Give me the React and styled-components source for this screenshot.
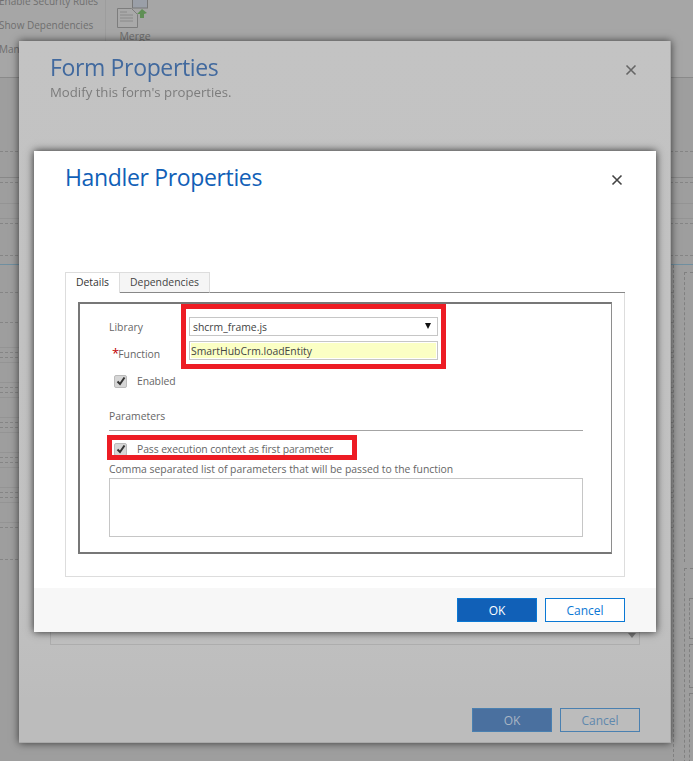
import React from "react";
import styled, { createGlobalStyle } from "styled-components";

const GlobalStyle = createGlobalStyle`
  html, body {
    margin: 0;
    padding: 0;
    background: #9e9e9e;
    font-family: "Open Sans", "Noto Sans", sans-serif;
  }
`;

const Page = styled.div`
  position: relative;
  width: 693px;
  height: 761px;
  overflow: hidden;
  background: #9e9e9e;
`;

const Ribbon = styled.div`
  display: flex;
  height: 78px;
  box-sizing: border-box;
  border-bottom: 1px solid #8a8a8a;
  background: #a6a6a6;
  overflow: hidden;
`;

const RibbonLinks = styled.div`
  display: flex;
  flex-direction: column;
  gap: 10px;
  width: 107px;
  margin-top: -6px;
  margin-left: -1px;
  box-sizing: border-box;
  border-right: 1px solid #9d9d9d;
`;

const RibbonLink = styled.div`
  font-size: 10px;
  line-height: 14px;
  color: #6f6f6f;
  white-space: nowrap;
`;

const MergeButton = styled.div`
  display: flex;
  flex-direction: column;
  align-items: center;
  width: 44px;
  margin-left: 7px;
  font-size: 10.5px;
  color: #6f6f6f;

  svg {
    align-self: flex-start;
    margin: 0 0 1px 4px;
  }
`;

const Rule = styled.div`
  height: 1px;
  margin-top: ${(p) => p.$gap}px;
  ${(p) =>
    p.$kind === "dash"
      ? "border-top: 1px dashed #858585; height: 0;"
      : p.$kind === "solid"
        ? "background: #888888;"
        : p.$kind === "blue"
          ? "background: #6f8fa0;"
          : "background: #949494;"}
`;

const Canvas = styled.div`
  display: flex;
`;

const CanvasRows = styled.div`
  flex: 1;
`;

const SideColumn = styled.div`
  width: 20px;
  height: 497px;
  box-sizing: border-box;
  padding: 7px 0 0 10px;
  border-left: 1px dashed #808080;
`;

const SideBox = styled.div`
  box-sizing: border-box;
  height: ${(p) => p.$height}px;
  margin-bottom: 6px;
  padding: ${(p) => (p.$nested ? "29px 0 0 4px" : "0")};
  border-left: 1px dashed #808080;
  border-top: 1px dashed #808080;
`;

const SideInnerBox = styled.div`
  box-sizing: border-box;
  height: ${(p) => p.$height}px;
  margin-bottom: 5px;
  border-left: 1px dashed #808080;
  border-top: 1px dashed #808080;
  border-bottom: 1px dashed #808080;
`;

const Dialog = styled.div`
  position: absolute;
  display: flex;
  flex-direction: column;
  box-sizing: border-box;
  left: 19px;
  top: 41px;
  width: 652px;
  height: 702px;
  background: linear-gradient(#c3c3c3, #c1c1c1 80%, #bababa);
  border-right: 1px solid #aaaaaa;
  border-bottom: 1px solid #aaaaaa;
  box-shadow: 0 0 8px rgba(0, 0, 0, 0.65);
`;

const DialogHead = styled.div`
  position: relative;
  padding: 7px 0 0 31px;
`;

const BackTitle = styled.div`
  font-size: 23px;
  font-weight: 400;
  line-height: 38px;
  letter-spacing: -0.35px;
  color: #41699e;
  filter: blur(0.3px);
`;

const BackSubtitle = styled.div`
  margin-top: -3px;
  font-size: 13.2px;
  line-height: 18px;
  color: #7c7c7c;
  filter: blur(0.3px);
`;

const CloseButton = styled.div`
  position: absolute;
  display: flex;
  top: ${(p) => p.$top}px;
  right: ${(p) => p.$right}px;
  width: 12px;
  height: 12px;
  color: ${(p) => p.$color};
`;

const BackBody = styled.div`
  flex: 1;
  display: flex;
  flex-direction: column;
  justify-content: flex-end;
  padding: 0 30px 0 31px;
`;

const BackBox = styled.div`
  position: relative;
  height: 60px;
  border: 1px solid #adadad;
  border-top: 0;
`;

const BackChevron = styled.div`
  position: absolute;
  right: 3px;
  bottom: 6px;
  border-left: 4px solid transparent;
  border-right: 4px solid transparent;
  border-top: 5px solid #7b7b7b;
`;

const BackFooter = styled.div`
  display: flex;
  justify-content: flex-end;
  gap: 8px;
  height: 44px;
  margin-top: 53px;
  padding: 10px 30px 0 0;
  box-sizing: border-box;
  background: #bcbcbc;
`;

const Button = styled.button`
  width: 80px;
  height: 24px;
  padding: 0;
  box-sizing: border-box;
  font-family: inherit;
  font-size: 12px;
  font-weight: 400;
  color: ${(p) => (p.$primary ? "#ffffff" : "#0a78d4")};
  background: ${(p) => (p.$primary ? "#1160b7" : "#ffffff")};
  border: 1px solid #0a78d4;
`;

const MutedButton = styled(Button)`
  color: ${(p) => (p.$primary ? "#a9b5c4" : "#5f88ad")};
  background: ${(p) => (p.$primary ? "#4a709f" : "transparent")};
  border-color: #4a80b0;
`;

const InnerDialog = styled.div`
  position: absolute;
  display: flex;
  flex-direction: column;
  box-sizing: border-box;
  left: 34px;
  top: 151px;
  width: 622px;
  height: 481px;
  background: #ffffff;
  box-shadow: 0 0 8px rgba(0, 0, 0, 0.8);
`;

const InnerHead = styled.div`
  position: relative;
  height: 121px;
  box-sizing: border-box;
  padding: 7px 0 0 31px;
`;

const InnerTitle = styled.div`
  font-size: 23px;
  font-weight: 400;
  line-height: 38px;
  letter-spacing: -0.35px;
  color: #1160b7;
`;

const TabArea = styled.div`
  position: relative;
  display: flex;
  flex-direction: column;
  height: 305px;
  margin: 0 31px;
  box-sizing: border-box;
  border-left: 1px solid #dddddd;
  border-right: 1px solid #dddddd;
  border-bottom: 1px solid #dddddd;
`;

const TabStrip = styled.div`
  display: flex;
  height: 21px;
  margin-left: -1px;
  box-sizing: border-box;
  margin-right: -1px;
`;

const Tab = styled.div`
  box-sizing: border-box;
  width: ${(p) => p.$width}px;
  padding-top: 1px;
  font-size: 10.4px;
  line-height: 16px;
  text-align: center;
  color: ${(p) => (p.$active ? "#333333" : "#444444")};
  background: ${(p) => (p.$active ? "#ffffff" : "#f5f5f5")};
  border: 1px solid #dddddd;
  border-bottom: ${(p) => (p.$active ? "0" : "1px solid #888888")};
  border-left-width: ${(p) => (p.$active ? "1px" : "0")};
`;

const TabFill = styled.div`
  flex: 1;
  background: #ffffff;
  border-bottom: 1px solid #888888;
`;

const GroupBox = styled.div`
  display: flex;
  flex-direction: column;
  height: 252px;
  margin: 9px 12px 0;
  padding: 13px 28px 0 29px;
  box-sizing: border-box;
  border: 1px solid #8e8e8e;
  border-top: 2px solid #777777;
  border-left: 2px solid #777777;
  border-bottom: 2px solid #777777;
`;

const FieldRow = styled.div`
  display: flex;
  align-items: center;
  height: 19px;
  margin-bottom: 5px;
`;

const FieldLabel = styled.div`
  display: flex;
  align-items: baseline;
  width: 80px;
  margin-top: ${(p) => p.$drop || 0}px;
  font-size: 10.4px;
  color: #666666;
`;

const Required = styled.span`
  margin: 0 -1px 0 3px;
  font-size: 13px;
  line-height: 10px;
  color: #c00000;
`;

const Select = styled.div`
  display: flex;
  align-items: center;
  justify-content: space-between;
  width: 249px;
  height: 19px;
  box-sizing: border-box;
  padding: 0 6px 0 3px;
  font-size: 10.4px;
  color: #444444;
  border: 1px solid #c6c6c6;
`;

const SelectArrow = styled.span`
  margin-top: -2px;
  border-left: 3.5px solid transparent;
  border-right: 3.5px solid transparent;
  border-top: 6px solid #111111;
`;

const RequiredInput = styled.div`
  width: 249px;
  height: 19px;
  box-sizing: border-box;
  padding: 1px 0 0 1px;
  font-size: 10.4px;
  line-height: 16px;
  color: #444444;
  background: #fbffc4;
  border: 1px solid #c6c6c6;
  box-shadow: inset 0 0 0 1px #ffffff;
`;

const CheckRow = styled.div`
  display: flex;
  align-items: center;
  height: 14px;
  margin: ${(p) => p.$margin};
  padding-left: 5px;
  font-size: 10.4px;
  letter-spacing: -0.1px;
  color: #666666;
`;

const CheckBox = styled.span`
  display: flex;
  align-items: center;
  justify-content: center;
  box-sizing: border-box;
  width: 13px;
  height: 13px;
  margin-right: 10px;
  border: 1px solid #bbbbbb;
  border-radius: 2px;
  background: #d6d6d6;
  color: #333333;
`;

const SectionTitle = styled.div`
  margin-top: 21px;
  padding-bottom: 7px;
  font-size: 10.4px;
  line-height: 14px;
  color: #666666;
  border-bottom: 1px solid #a4a4a4;
`;

const HintText = styled.div`
  margin-top: 6px;
  font-size: 10.4px;
  line-height: 14px;
  white-space: nowrap;
  color: #666666;
`;

const ParamsBox = styled.div`
  height: 59px;
  margin-top: 2px;
  box-sizing: border-box;
  border: 1px solid #c6c6c6;
`;

const Footer = styled.div`
  display: flex;
  justify-content: flex-end;
  gap: 8px;
  flex: 1;
  margin-top: 11px;
  padding: 10px 31px 0 0;
  box-sizing: border-box;
  background: #f7f7f7;
`;

const RedFrameFields = styled.div`
  position: absolute;
  left: 147px;
  top: 153px;
  width: 265px;
  height: 65px;
  box-sizing: border-box;
  border: 5px solid #ed1c24;
`;

const RedFrameContext = styled.div`
  position: absolute;
  left: 73px;
  top: 284px;
  width: 250px;
  height: 25px;
  box-sizing: border-box;
  border: 5px solid #ed1c24;
`;

const CloseIcon = () => (
  <svg width="12" height="12" viewBox="0 0 12 12" fill="none" stroke="currentColor" strokeWidth="1.6">
    <path d="M1.5 1.5 10.5 10.5M10.5 1.5 1.5 10.5" />
  </svg>
);

const CheckIcon = () => (
  <svg width="10" height="10" viewBox="0 0 10 10" fill="none" stroke="currentColor" strokeWidth="2">
    <path d="M1.5 5.5 4 8 8.5 1.5" />
  </svg>
);

const MergeIcon = () => (
  <svg width="32" height="28" viewBox="0 0 32 28">
    <rect x="15.5" y="-6" width="15" height="14" fill="#9a9fa8" stroke="#777" />
    <path d="M.5 8.5h14l6 6v13H.5z" fill="#a9a9a9" stroke="#7d7d7d" />
    <path d="M3 12h7M3 15h13M3 18h13M3 21h13" stroke="#8a8a8a" />
    <path d="M23 18v-4h-3l5-5 5 4-3 1v4z" fill="#5f8f55" />
  </svg>
);

const upperRules = [
  [151, "dash"],
  [177, "solid"],
  [182, "dash"],
  [203, "faint"],
  [218, "faint"],
  [223, "dash"],
  [255, "dash"],
  [264, "blue"],
];

const lowerRules = [
  [292, "dash"],
  [322, "dash"],
  [347, "faint"],
  [352, "dash"],
  [357, "dash"],
  [362, "faint"],
  [382, "faint"],
  [387, "dash"],
  [392, "dash"],
  [397, "faint"],
  [417, "faint"],
  [422, "dash"],
  [427, "dash"],
  [432, "faint"],
  [452, "faint"],
  [457, "dash"],
  [462, "dash"],
  [467, "faint"],
  [487, "faint"],
  [492, "dash"],
  [497, "dash"],
  [502, "faint"],
  [522, "faint"],
  [527, "dash"],
  [559, "dash"],
];

// each rule is given by its y on the page, the gap is what flows between them
const renderRules = (rules, start) =>
  rules.map(([y, kind], i) => {
    const prev = i === 0 ? start : rules[i - 1][0] + 1;
    return <Rule key={y} $kind={kind} $gap={y - prev} />;
  });

const App = () => {
  return (
    <Page>
      <GlobalStyle />
      <Ribbon>
        <RibbonLinks>
          <RibbonLink>Enable Security Rules</RibbonLink>
          <RibbonLink>Show Dependencies</RibbonLink>
          <RibbonLink>Manage</RibbonLink>
        </RibbonLinks>
        <MergeButton>
          <MergeIcon />
          Merge
        </MergeButton>
      </Ribbon>
      {renderRules(upperRules, 78)}
      <Canvas>
        <CanvasRows>{renderRules(lowerRules, 265)}</CanvasRows>
        <SideColumn>
          <SideBox $height={290} />
          <SideBox $nested $height={200}>
            <SideInnerBox $height={41} />
            <SideInnerBox $height={44} />
            <SideInnerBox $height={80} />
          </SideBox>
        </SideColumn>
      </Canvas>

      <Dialog>
        <DialogHead>
          <BackTitle>Form Properties</BackTitle>
          <BackSubtitle>Modify this form's properties.</BackSubtitle>
          <CloseButton $top={23} $right={33} $color="#666666">
            <CloseIcon />
          </CloseButton>
        </DialogHead>
        <BackBody>
          <BackBox>
            <BackChevron />
          </BackBox>
        </BackBody>
        <BackFooter>
          <MutedButton $primary>OK</MutedButton>
          <MutedButton>Cancel</MutedButton>
        </BackFooter>
      </Dialog>

      <InnerDialog>
        <InnerHead>
          <InnerTitle>Handler Properties</InnerTitle>
          <CloseButton $top={23} $right={33} $color="#444444">
            <CloseIcon />
          </CloseButton>
        </InnerHead>
        <TabArea>
          <TabStrip>
            <Tab $active $width={55}>
              Details
            </Tab>
            <Tab $width={90}>Dependencies</Tab>
            <TabFill />
          </TabStrip>
          <GroupBox>
            <FieldRow>
              <FieldLabel>Library</FieldLabel>
              <Select>
                shcrm_frame.js
                <SelectArrow />
              </Select>
            </FieldRow>
            <FieldRow>
              <FieldLabel $drop={6}>
                <Required>*</Required>
                Function
              </FieldLabel>
              <RequiredInput>SmartHubCrm.loadEntity</RequiredInput>
            </FieldRow>
            <CheckRow $margin="9px 0 0">
              <CheckBox>
                <CheckIcon />
              </CheckBox>
              Enabled
            </CheckRow>
            <SectionTitle>Parameters</SectionTitle>
            <CheckRow $margin="11px 0 0">
              <CheckBox>
                <CheckIcon />
              </CheckBox>
              Pass execution context as first parameter
            </CheckRow>
            <HintText>Comma separated list of parameters that will be passed to the function</HintText>
            <ParamsBox />
          </GroupBox>
        </TabArea>
        <Footer>
          <Button $primary>OK</Button>
          <Button>Cancel</Button>
        </Footer>
        <RedFrameFields />
        <RedFrameContext />
      </InnerDialog>
    </Page>
  );
};

export default App;
